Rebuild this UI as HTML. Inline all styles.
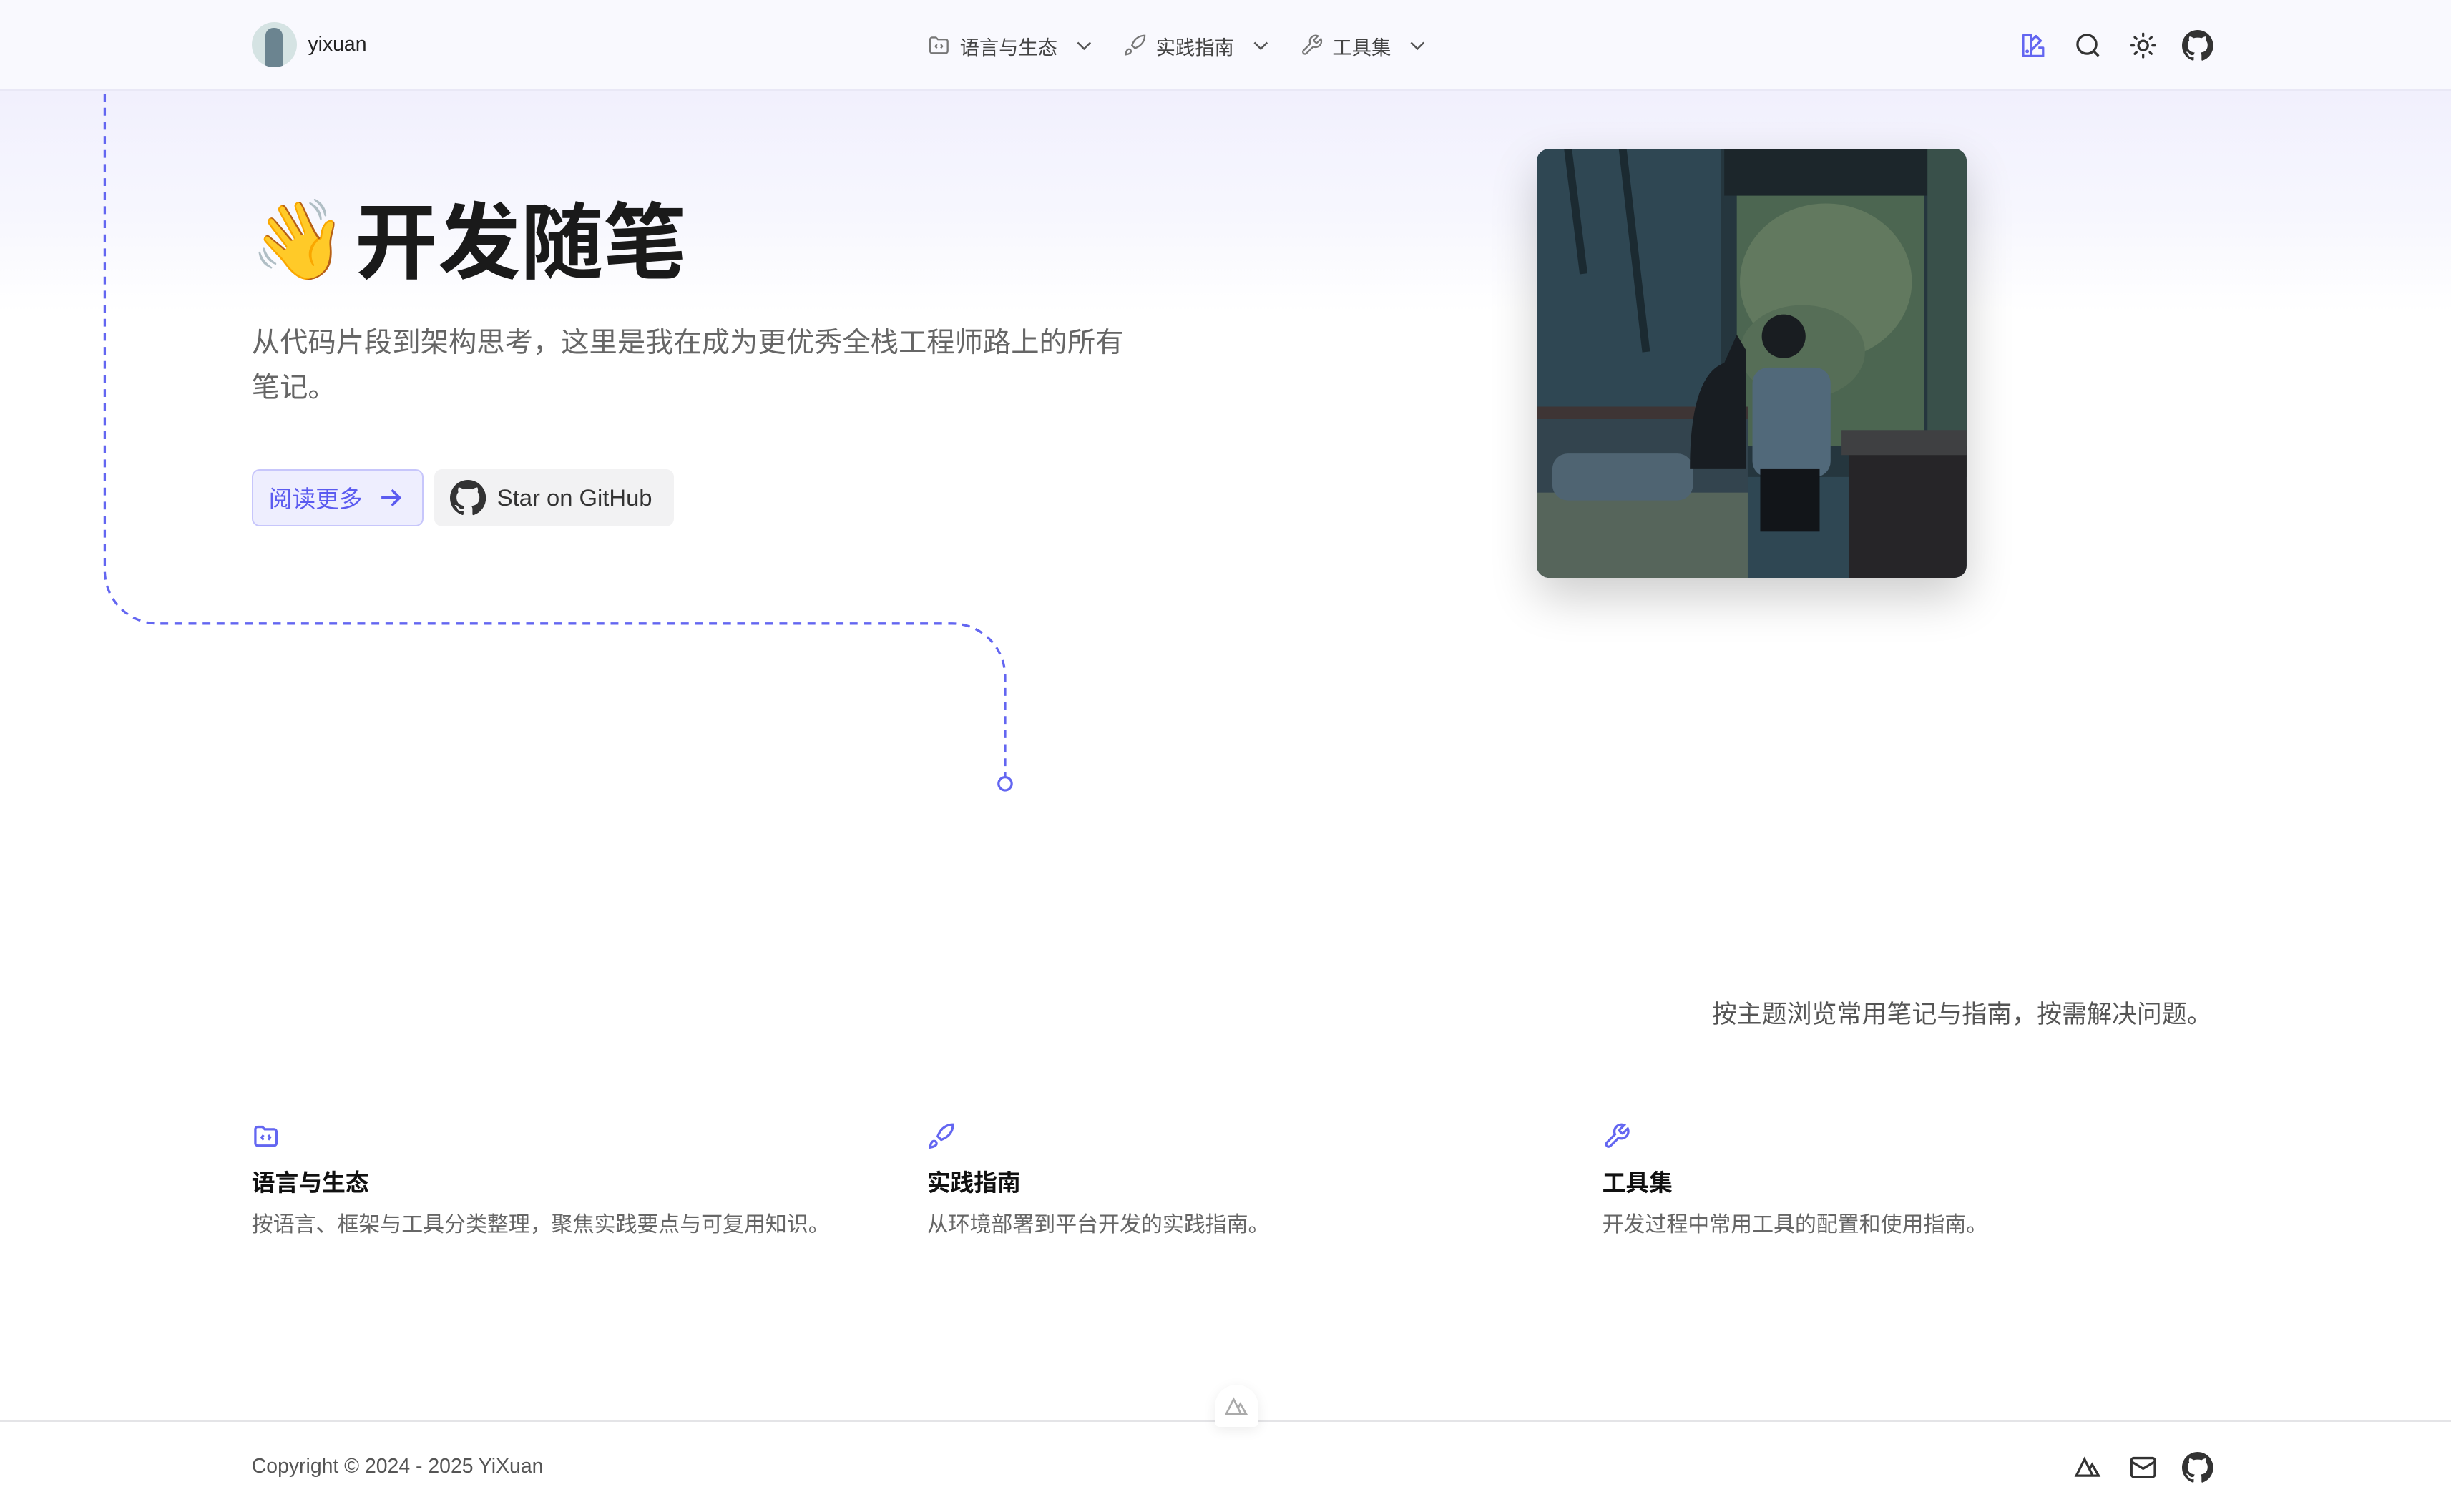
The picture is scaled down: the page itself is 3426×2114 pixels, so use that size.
<!DOCTYPE html>
<html><head><meta charset="utf-8"><style>
html,body{margin:0;padding:0;background:#fff}
body{zoom:2.185;width:1568px;height:967px;position:relative;overflow:hidden;font-family:"Liberation Sans","Noto Sans CJK SC",sans-serif;color:#222}
.abs{position:absolute}
.bg{left:0;top:0;width:1568px;height:260px;background:linear-gradient(#eeedfd 0px,#f1f0fd 60px,#f7f7fe 140px,#fff 200px)}
.hdr{left:0;top:0;width:1568px;height:57px;background:rgba(249,249,254,.9);border-bottom:1px solid #e9e8f6}
.nav{font-size:12.5px;color:#444;display:flex;align-items:center;gap:3px}
svg{display:block}
</style></head><body>
<div class="abs bg"></div>
<div class="abs hdr"></div>
<div class="abs" style="left:161px;top:14px;width:29px;height:29px;border-radius:50%;background:#d5e3e3;overflow:hidden"><div style="position:absolute;left:9px;top:4px;width:11px;height:26px;background:#6b8490;border-radius:5px 5px 0 0"></div></div>
<div class="abs" style="left:197px;top:21px;font-size:13px;color:#222">yixuan</div>
<div class="abs nav" style="left:593px;top:20px">
<svg width="15" height="15" viewBox="0 0 24 24" fill="none" stroke="#777" stroke-width="1.7"><path d="M3 6a2 2 0 0 1 2-2h4l2 2h8a2 2 0 0 1 2 2v10a2 2 0 0 1-2 2H5a2 2 0 0 1-2-2z"/><path d="M10 11l-1.5 2 1.5 2M14 11l1.5 2-1.5 2"/></svg>
<span style="margin-left:3px">语言与生态</span>
<svg style="margin-left:7px" width="14" height="14" viewBox="0 0 24 24" fill="none" stroke="#555" stroke-width="2"><path d="M5 9l7 7 7-7"/></svg>
<svg style="margin-left:15px" width="15" height="15" viewBox="0 0 24 24" fill="none" stroke="#777" stroke-width="1.7"><path d="M4.5 16.5c-1.5 1.3-2 5-2 5s3.7-.5 5-2c.7-.8.7-2.1-.1-2.9a2.2 2.2 0 0 0-2.9-.1zM12 15l-3-3a22 22 0 0 1 2-4A13 13 0 0 1 22 2c0 2.7-.8 7.5-6 11a22 22 0 0 1-4 2z"/></svg>
<span style="margin-left:3px">实践指南</span>
<svg style="margin-left:7px" width="14" height="14" viewBox="0 0 24 24" fill="none" stroke="#555" stroke-width="2"><path d="M5 9l7 7 7-7"/></svg>
<svg style="margin-left:15px" width="15" height="15" viewBox="0 0 24 24" fill="none" stroke="#777" stroke-width="1.7"><path d="M14.7 6.3a1 1 0 0 0 0 1.4l1.6 1.6a1 1 0 0 0 1.4 0l3.8-3.8a6 6 0 0 1-7.9 7.9l-6.9 6.9a2.1 2.1 0 0 1-3-3l6.9-6.9a6 6 0 0 1 7.9-7.9z"/></svg>
<span style="margin-left:3px">工具集</span>
<svg style="margin-left:7px" width="14" height="14" viewBox="0 0 24 24" fill="none" stroke="#555" stroke-width="2"><path d="M5 9l7 7 7-7"/></svg>
</div>
<svg class="abs" style="left:1292px;top:20px" width="18" height="18" viewBox="0 0 24 24" fill="none" stroke="#6366f1" stroke-width="2" stroke-linejoin="round"><path d="M3 4a1 1 0 0 1 1-1h5a1 1 0 0 1 1 1v16a1 1 0 0 1-1 1H4a1 1 0 0 1-1-1zM10 8l4-4 4 4-8 8M10 21h10v-7h-4"/><circle cx="6.5" cy="17" r=".5" fill="#6366f1"/></svg>
<svg class="abs" style="left:1327px;top:20px" width="18" height="18" viewBox="0 0 24 24" fill="none" stroke="#333" stroke-width="2"><circle cx="11" cy="11" r="8"/><path d="M21 21l-4.3-4.3"/></svg>
<svg class="abs" style="left:1362px;top:20px" width="18" height="18" viewBox="0 0 24 24" fill="none" stroke="#333" stroke-width="2" stroke-linecap="round"><circle cx="12" cy="12" r="4"/><path d="M12 2v2M12 20v2M4.9 4.9l1.4 1.4M17.7 17.7l1.4 1.4M2 12h2M20 12h2M4.9 19.1l1.4-1.4M17.7 6.3l1.4-1.4"/></svg>
<svg class="abs" style="left:1396px;top:19px" width="20" height="20" viewBox="0 0 16 16" fill="#333"><path d="M8 0C3.58 0 0 3.58 0 8c0 3.54 2.29 6.53 5.47 7.59.4.07.55-.17.55-.38v-1.33c-2.23.48-2.7-1.07-2.7-1.07-.36-.92-.89-1.17-.89-1.17-.73-.5.06-.49.06-.49.8.06 1.23.83 1.23.83.71 1.22 1.87.87 2.33.66.07-.52.28-.87.51-1.07-1.78-.2-3.65-.89-3.65-3.95 0-.87.31-1.59.82-2.15-.08-.2-.36-1.02.08-2.12 0 0 .67-.21 2.2.82a7.6 7.6 0 0 1 4 0c1.53-1.04 2.2-.82 2.2-.82.44 1.1.16 1.92.08 2.12.51.56.82 1.27.82 2.15 0 3.07-1.87 3.75-3.65 3.95.29.25.54.73.54 1.48v2.2c0 .21.15.46.55.38A8 8 0 0 0 16 8c0-4.42-3.58-8-8-8z"/></svg>

<svg class="abs" style="left:0;top:0" width="700" height="520"><path d="M67 60V365a34 34 0 0 0 34 34H609a34 34 0 0 1 34 34V497" fill="none" stroke="#6366f1" stroke-width="1.5" stroke-dasharray="5 4"/><circle cx="643" cy="501.5" r="4.2" fill="#fff" stroke="#6366f1" stroke-width="1.5"/></svg>

<div class="abs" style="left:160px;top:124px;font-size:50px;line-height:60px">👋</div>
<div class="abs" style="left:227px;top:120px;font-size:53px;font-weight:bold;color:#1a1a1a;line-height:72px">开发随笔</div>
<div class="abs" style="left:161px;top:205px;width:570px;font-size:18px;line-height:29px;color:#666">从代码片段到架构思考，这里是我在成为更优秀全栈工程师路上的所有笔记。</div>
<div class="abs" style="left:161px;top:300px;width:108px;height:35px;border:1px solid #c7c6fb;background:#eeeefe;border-radius:5px;box-sizing:content-box;display:flex;align-items:center;font-size:15px;color:#5b5bf0"><span style="margin-left:10px">阅读更多</span><svg style="margin-left:8px" width="20" height="20" viewBox="0 0 24 24" fill="none" stroke="#5b5bf0" stroke-width="2"><path d="M5 12h14M13 6l6 6-6 6"/></svg></div>
<div class="abs" style="left:278px;top:300px;width:153px;height:37px;background:#f2f2f3;border-radius:5px;display:flex;align-items:center;font-size:15px;color:#333"><svg style="margin-left:10px" width="23" height="23" viewBox="0 0 16 16" fill="#333"><path d="M8 0C3.58 0 0 3.58 0 8c0 3.54 2.29 6.53 5.47 7.59.4.07.55-.17.55-.38v-1.33c-2.23.48-2.7-1.07-2.7-1.07-.36-.92-.89-1.17-.89-1.17-.73-.5.06-.49.06-.49.8.06 1.23.83 1.23.83.71 1.22 1.87.87 2.33.66.07-.52.28-.87.51-1.07-1.78-.2-3.65-.89-3.65-3.95 0-.87.31-1.59.82-2.15-.08-.2-.36-1.02.08-2.12 0 0 .67-.21 2.2.82a7.6 7.6 0 0 1 4 0c1.53-1.04 2.2-.82 2.2-.82.44 1.1.16 1.92.08 2.12.51.56.82 1.27.82 2.15 0 3.07-1.87 3.75-3.65 3.95.29.25.54.73.54 1.48v2.2c0 .21.15.46.55.38A8 8 0 0 0 16 8c0-4.42-3.58-8-8-8z"/></svg><span style="margin-left:7px">Star on GitHub</span></div>

<div class="abs" style="left:983px;top:95px;width:275px;height:275px;border-radius:8px;overflow:hidden;box-shadow:0 12px 30px rgba(0,0,0,.2)">
<svg width="275" height="275" viewBox="0 0 275 275">
<rect width="275" height="275" fill="#2f4753"/>
<rect x="118" y="0" width="157" height="210" fill="#25363e"/>
<rect x="128" y="30" width="120" height="160" fill="#4c6651"/>
<ellipse cx="185" cy="85" rx="55" ry="50" fill="#62795f"/>
<ellipse cx="170" cy="130" rx="40" ry="30" fill="#566e57"/>
<rect x="120" y="0" width="130" height="30" fill="#1c262b"/>
<rect x="250" y="0" width="25" height="210" fill="#39504a"/>
<rect x="0" y="165" width="135" height="8" fill="#3e3535"/>
<rect x="0" y="173" width="135" height="102" fill="#33444e"/>
<rect x="0" y="220" width="135" height="55" fill="#56655b"/>
<rect x="10" y="195" width="90" height="30" rx="10" fill="#4f6472"/>
<path d="M98 205 q0-60 22-68 l8 -18 l6 10 v76 z" fill="#181d22"/>
<rect x="138" y="140" width="50" height="70" rx="10" fill="#51697a"/>
<circle cx="158" cy="120" r="14" fill="#191d21"/>
<rect x="143" y="205" width="38" height="40" fill="#121519"/>
<rect x="200" y="190" width="75" height="85" fill="#262528"/>
<rect x="195" y="180" width="80" height="16" fill="#3f4042"/>
<path d="M20 0 l10 80 M55 0 l15 130" stroke="#1b2a31" stroke-width="5" fill="none"/>
</svg></div>

<div class="abs" style="right:153px;top:636px;font-size:16px;color:#555;text-align:right">按主题浏览常用笔记与指南，按需解决问题。</div>

<svg class="abs" style="left:161px;top:718px" width="18" height="18" viewBox="0 0 24 24" fill="none" stroke="#6366f1" stroke-width="2"><path d="M3 6a2 2 0 0 1 2-2h4l2 2h8a2 2 0 0 1 2 2v10a2 2 0 0 1-2 2H5a2 2 0 0 1-2-2z"/><path d="M10 11l-1.5 2 1.5 2M14 11l1.5 2-1.5 2"/></svg>
<svg class="abs" style="left:593px;top:718px" width="18" height="18" viewBox="0 0 24 24" fill="none" stroke="#6366f1" stroke-width="2"><path d="M4.5 16.5c-1.5 1.3-2 5-2 5s3.7-.5 5-2c.7-.8.7-2.1-.1-2.9a2.2 2.2 0 0 0-2.9-.1zM12 15l-3-3a22 22 0 0 1 2-4A13 13 0 0 1 22 2c0 2.7-.8 7.5-6 11a22 22 0 0 1-4 2z"/></svg>
<svg class="abs" style="left:1025px;top:718px" width="18" height="18" viewBox="0 0 24 24" fill="none" stroke="#6366f1" stroke-width="2"><path d="M14.7 6.3a1 1 0 0 0 0 1.4l1.6 1.6a1 1 0 0 0 1.4 0l3.8-3.8a6 6 0 0 1-7.9 7.9l-6.9 6.9a2.1 2.1 0 0 1-3-3l6.9-6.9a6 6 0 0 1 7.9-7.9z"/></svg>
<div class="abs" style="left:161px;top:745px;font-size:15px;font-weight:bold;color:#111">语言与生态</div>
<div class="abs" style="left:593px;top:745px;font-size:15px;font-weight:bold;color:#111">实践指南</div>
<div class="abs" style="left:1025px;top:745px;font-size:15px;font-weight:bold;color:#111">工具集</div>
<div class="abs" style="left:161px;top:772px;font-size:13.7px;color:#666">按语言、框架与工具分类整理，聚焦实践要点与可复用知识。</div>
<div class="abs" style="left:593px;top:772px;font-size:13.7px;color:#666">从环境部署到平台开发的实践指南。</div>
<div class="abs" style="left:1025px;top:772px;font-size:13.7px;color:#666">开发过程中常用工具的配置和使用指南。</div>

<div class="abs" style="left:0;top:909px;width:1568px;border-top:1px solid #e4e4e7"></div>
<div class="abs" style="left:777px;top:886px;width:28px;height:27px;background:#fff;border-radius:14px 14px 3px 3px;box-shadow:0 2px 8px rgba(0,0,0,.08)"></div>
<svg class="abs" style="left:782px;top:892px" width="18" height="16" viewBox="0 0 24 24" fill="none" stroke="#aaa" stroke-width="1.8"><path d="M13.5 19H21l-5.5-9.5-2 3.4M9 5L2 19h14z"/></svg>
<div class="abs" style="left:161px;top:931px;font-size:13px;color:#555">Copyright © 2024 - 2025 YiXuan</div>
<svg class="abs" style="left:1327px;top:930px" width="18" height="18" viewBox="0 0 24 24" fill="none" stroke="#333" stroke-width="2"><path d="M13.5 19H21l-5.5-9.5-2 3.4M9 5L2 19h14z"/></svg>
<svg class="abs" style="left:1362px;top:930px" width="18" height="18" viewBox="0 0 24 24" fill="none" stroke="#333" stroke-width="2"><rect x="2" y="4" width="20" height="16" rx="2"/><path d="M22 7l-10 6L2 7"/></svg>
<svg class="abs" style="left:1396px;top:929px" width="20" height="20" viewBox="0 0 16 16" fill="#333"><path d="M8 0C3.58 0 0 3.58 0 8c0 3.54 2.29 6.53 5.47 7.59.4.07.55-.17.55-.38v-1.33c-2.23.48-2.7-1.07-2.7-1.07-.36-.92-.89-1.17-.89-1.17-.73-.5.06-.49.06-.49.8.06 1.23.83 1.23.83.71 1.22 1.87.87 2.33.66.07-.52.28-.87.51-1.07-1.78-.2-3.65-.89-3.65-3.95 0-.87.31-1.59.82-2.15-.08-.2-.36-1.02.08-2.12 0 0 .67-.21 2.2.82a7.6 7.6 0 0 1 4 0c1.53-1.04 2.2-.82 2.2-.82.44 1.1.16 1.92.08 2.12.51.56.82 1.27.82 2.15 0 3.07-1.87 3.75-3.65 3.95.29.25.54.73.54 1.48v2.2c0 .21.15.46.55.38A8 8 0 0 0 16 8c0-4.42-3.58-8-8-8z"/></svg>
</body></html>
